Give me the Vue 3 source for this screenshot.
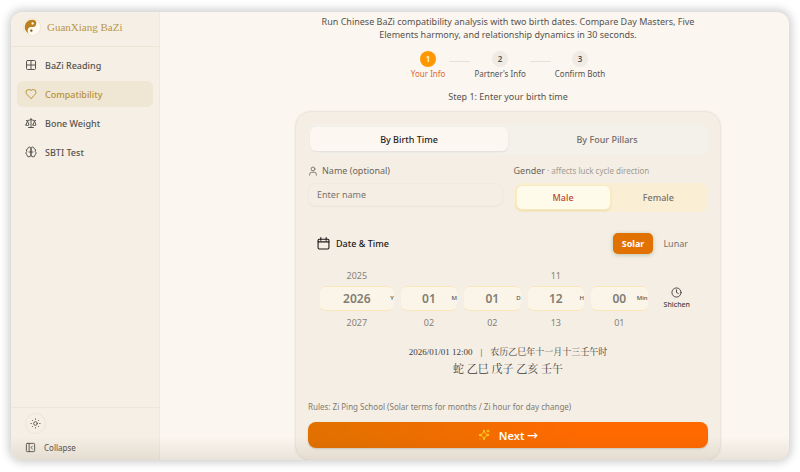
<script setup>
import { ref } from 'vue'

const nav = ref([
  { id: 'reading', label: 'BaZi Reading' },
  { id: 'match', label: 'Compatibility' },
  { id: 'bone', label: 'Bone Weight' },
  { id: 'sbti', label: 'SBTI Test' },
])
const current = ref('match')
const steps = ['Your Info', "Partner's Info", 'Confirm Both']
const step = ref(0)
const mode = ref('time')
const name = ref('')
const gender = ref('male')
const calendar = ref('solar')
const wheels = [
  { unit: 'Y', prev: '2025', value: '2026', next: '2027' },
  { unit: 'M', prev: '', value: '01', next: '02' },
  { unit: 'D', prev: '', value: '01', next: '02' },
  { unit: 'H', prev: '11', value: '12', next: '13' },
  { unit: 'Min', prev: '', value: '00', next: '01' },
]
</script>

<template>
  <div class="window">
    <aside class="sidebar">
      <a class="brand" href="#">
        <svg class="logo" viewBox="0 0 32 32" aria-hidden="true">
          <circle cx="16" cy="16" r="15.200" fill="#fffaf2" stroke="#ecdcc4" stroke-width="1" />
          <g transform="rotate(10 16 16)">
            <path d="M16 3A13 13 0 0 0 16 29A6.500 6.500 0 0 1 16 16A6.500 6.500 0 0 0 16 3Z" fill="#b9811f" />
            <circle cx="16" cy="9.500" r="2.200" fill="#fffaf2" />
            <circle cx="16" cy="22.500" r="2.200" fill="#8a5a14" />
          </g>
        </svg>
        <span>GuanXiang BaZi</span>
      </a>
      <nav class="nav">
        <a v-for="n in nav" :key="n.id" href="#" :class="{ active: n.id === current }" @click.prevent="current = n.id">
          <svg class="icon" viewBox="0 0 24 24" aria-hidden="true">
            <template v-if="n.id === 'reading'">
              <rect x="3" y="3" width="18" height="18" rx="2" /><path d="M3 12h18M12 3v18" />
            </template>
            <path v-else-if="n.id === 'match'" d="M19 14c1.500-1.500 3-3.200 3-5.500A5.500 5.500 0 0 0 16.500 3c-1.800 0-3 .5-4.500 2-1.500-1.500-2.700-2-4.500-2A5.500 5.500 0 0 0 2 8.500c0 2.300 1.500 4 3 5.500l7 7Z" />
            <template v-else-if="n.id === 'bone'">
              <path d="m16 16 3-8 3 8c-.9.650-1.900 1-3 1s-2.100-.350-3-1ZM2 16l3-8 3 8c-.9.650-1.900 1-3 1s-2.100-.350-3-1ZM7 21h10M12 3v18M3 7h2c2 0 5-1 7-2 2 1 5 2 7 2h2" />
            </template>
            <template v-else>
              <path d="M12 5a3 3 0 1 0-6 .1 4 4 0 0 0-2.500 5.800 4 4 0 0 0 .5 6.600A4 4 0 1 0 12 18ZM12 5a3 3 0 1 1 6 .1 4 4 0 0 1 2.500 5.800 4 4 0 0 1-.5 6.600A4 4 0 1 1 12 18ZM8 12h8" />
            </template>
          </svg>
          <span>{{ n.label }}</span>
        </a>
      </nav>
      <div class="side-foot">
        <button class="theme" type="button" aria-label="Theme">
          <svg class="icon small" viewBox="0 0 24 24" aria-hidden="true">
            <circle cx="12" cy="12" r="4" />
            <path d="M12 2v1M12 21v1M4.900 4.900l.7.7M18.400 18.400l.7.7M2 12h1M21 12h1M5.600 18.400l-.7.7M19.100 4.900l-.7.7" />
          </svg>
        </button>
        <button class="collapse" type="button">
          <svg class="icon small" viewBox="0 0 24 24" aria-hidden="true">
            <rect x="3" y="3" width="18" height="18" rx="2" /><path d="M9 3v18M16 15l-3-3 3-3" />
          </svg>
          <span>Collapse</span>
        </button>
      </div>
    </aside>

    <main class="main">
      <p class="intro">Run Chinese BaZi compatibility analysis with two birth dates. Compare Day Masters, Five Elements harmony, and relationship dynamics in 30 seconds.</p>
      <ol class="steps">
        <template v-for="(s, i) in steps" :key="s">
          <li v-if="i" class="rule" aria-hidden="true"></li>
          <li class="step" :class="{ on: i === step }">
            <span class="dot">{{ i + 1 }}</span>
            <span>{{ s }}</span>
          </li>
        </template>
      </ol>
      <h2 class="title">Step 1: Enter your birth time</h2>

      <form class="card" @submit.prevent>
        <div class="tabs" role="tablist">
          <button type="button" role="tab" :class="{ on: mode === 'time' }" :aria-selected="mode === 'time'" @click="mode = 'time'">By Birth Time</button>
          <button type="button" role="tab" :class="{ on: mode === 'pillars' }" :aria-selected="mode === 'pillars'" @click="mode = 'pillars'">By Four Pillars</button>
        </div>

        <div class="person">
          <div class="field">
            <label class="label" for="name">
              <svg class="icon user" viewBox="0 0 24 24" aria-hidden="true">
                <circle cx="12" cy="7" r="4.500" /><path d="M20 22v-2a5 5 0 0 0-5-5H9a5 5 0 0 0-5 5v2" />
              </svg>
              Name (optional)
            </label>
            <input id="name" v-model="name" class="text" type="text" placeholder="Enter name" />
          </div>
          <div class="field">
            <div id="gender-label" class="label gender-label">Gender <small>· affects luck cycle direction</small></div>
            <div class="gender" role="radiogroup" aria-labelledby="gender-label">
              <label :class="{ on: gender === 'male' }"><input v-model="gender" type="radio" name="gender" value="male" />Male</label>
              <label :class="{ on: gender === 'female' }"><input v-model="gender" type="radio" name="gender" value="female" />Female</label>
            </div>
          </div>
        </div>

        <section class="when">
          <header class="when-head">
            <h3>
              <svg class="icon cal" viewBox="0 0 24 24" aria-hidden="true">
                <rect x="2" y="4" width="20" height="18" rx="2" /><path d="M7 1v5M17 1v5M2 9h20" />
              </svg>
              Date &amp; Time
            </h3>
            <div class="switch">
              <button type="button" :class="{ on: calendar === 'solar' }" @click="calendar = 'solar'">Solar</button>
              <button type="button" :class="{ on: calendar === 'lunar' }" @click="calendar = 'lunar'">Lunar</button>
            </div>
          </header>
          <div class="wheels">
            <div v-for="w in wheels" :key="w.unit" class="wheel">
              <span class="near">{{ w.prev }}</span>
              <div class="value"><strong>{{ w.value }}</strong><span class="unit">{{ w.unit }}</span></div>
              <span class="near">{{ w.next }}</span>
            </div>
            <button class="shichen" type="button">
              <svg class="icon small" viewBox="0 0 24 24" aria-hidden="true">
                <circle cx="12" cy="12" r="10" /><path d="M12 6v6l4 2" />
              </svg>
              Shichen
            </button>
          </div>
          <div class="result">
            <p class="dates"><span>2026/01/01 12:00</span><i>|</i><span>农历乙巳年十一月十三壬午时</span></p>
            <p class="pillars">蛇 乙巳 戊子 乙亥 壬午</p>
          </div>
        </section>

        <p class="rules">Rules: Zi Ping School (Solar terms for months / Zi hour for day change)</p>
        <button class="next" type="submit">
          <svg class="icon spark" viewBox="0 0 24 24" aria-hidden="true">
            <path d="M9.900 15.500A2 2 0 0 0 8.500 14.100l-6.100-1.600a.5.5 0 0 1 0-1L8.500 9.900A2 2 0 0 0 9.900 8.500l1.600-6.100a.5.5 0 0 1 1 0l1.600 6.100a2 2 0 0 0 1.400 1.400l6.100 1.600a.5.5 0 0 1 0 1l-6.100 1.600a2 2 0 0 0-1.400 1.400l-1.600 6.100a.5.5 0 0 1-1 0ZM20 2v4M22 4h-4M4 20h.1" />
          </svg>
          <span>Next →</span>
        </button>
      </form>
    </main>
  </div>
</template>

<style>
body {
  margin: 0;
  background: #fff;
}
</style>

<style scoped>
* {
  box-sizing: border-box;
}
p,
h2,
h3,
ol {
  margin: 0;
  padding: 0;
  font-weight: 400;
  list-style: none;
}
button,
input {
  font: inherit;
  color: inherit;
  border: 0;
  background: none;
  padding: 0;
  margin: 0;
}
a {
  color: inherit;
  text-decoration: none;
}
.window {
  position: relative;
  display: flex;
  height: calc(100vh - 24px);
  margin: 12px 11px;
  overflow: hidden;
  border-radius: 12px;
  background: #fbf6ef;
  box-shadow: 0 0 9px 3px rgba(0, 0, 0, 0.18);
  font: 9px/13px "Noto Sans", "Noto Sans CJK SC", sans-serif;
  color: #57534e;
}
.window::after {
  content: "";
  position: absolute;
  inset: auto 0 0;
  height: 24px;
  background: linear-gradient(transparent, rgba(80, 60, 40, 0.1));
  pointer-events: none;
}
.icon {
  width: 12px;
  height: 12px;
  flex: none;
  fill: none;
  stroke: currentColor;
  stroke-width: 2;
  stroke-linecap: round;
  stroke-linejoin: round;
}
.small {
  width: 11px;
  height: 11px;
}
.user {
  width: 10px;
  height: 10px;
}
.sidebar {
  display: flex;
  flex-direction: column;
  flex: 0 0 149px;
  background: #f5efe5;
  border-right: 1px solid #efe8dc;
}
.brand {
  display: flex;
  align-items: center;
  gap: 6px;
  height: 35px;
  padding: 0 12px 4px;
  border-bottom: 1px solid #ece5d6;
  font: 11px/16px "Liberation Serif", serif;
  color: #b8964a;
}
.logo {
  width: 18px;
  height: 18px;
}
.nav {
  display: flex;
  flex-direction: column;
  gap: 3px;
  padding: 5px 6px;
  font-weight: 500;
}
.nav a {
  display: flex;
  align-items: center;
  gap: 8px;
  height: 26px;
  padding: 0 8px;
  border-radius: 6px;
}
.nav a.active {
  background: #efe6d3;
  color: #b8923a;
}
.side-foot {
  display: flex;
  flex-direction: column;
  align-items: flex-start;
  gap: 7px;
  margin-top: auto;
  padding: 5px 14px 6px;
  border-top: 1px solid #ebe6d9;
  font-size: 8px;
}
.theme {
  display: grid;
  place-items: center;
  width: 21px;
  height: 21px;
  border: 1px solid #ebe6da;
  border-radius: 50%;
}
.collapse {
  display: flex;
  align-items: center;
  gap: 8px;
}
.main {
  flex: 1;
  min-width: 0;
  padding: 3px 68px 0 135px;
}
.intro {
  padding: 0 16px;
  text-align: center;
}
.steps {
  display: flex;
  justify-content: center;
  gap: 4px;
  margin-top: 10px;
  font-size: 8px;
  line-height: 12px;
}
.step {
  display: flex;
  flex-direction: column;
  align-items: center;
  gap: 1px;
}
.dot {
  display: grid;
  place-items: center;
  width: 16px;
  height: 16px;
  border-radius: 50%;
  background: #f0ebe4;
  font-weight: 600;
}
.step.on {
  color: #dd6b35;
}
.on .dot {
  background: #ff9800;
  color: #fff;
}
.rule {
  width: 21px;
  height: 1px;
  margin-top: 10px;
  background: #e5e0d9;
}
.title {
  margin: 10px 0 8px;
  font-size: 9px;
  text-align: center;
}
.card {
  padding: 12px;
  border: 1px solid #eae5dc;
  border-radius: 16px;
  background: #f5eee4;
  box-shadow: 0 0 3px rgba(100, 90, 70, 0.08);
}
.tabs {
  display: grid;
  grid-template-columns: 1fr 1fr;
  padding: 3px 2px;
  border-radius: 8px;
  background: #f4f0ea;
  font-weight: 500;
}
.tabs button {
  height: 24px;
  border-radius: 6px;
  color: #706c67;
}
.tabs button.on {
  background: #fcf7f0;
  color: #292524;
  box-shadow: 0 1px 2px rgba(0, 0, 0, 0.08);
}
.person {
  display: grid;
  grid-template-columns: 1fr 1fr;
  gap: 11px;
  margin-top: 10px;
}
.label {
  display: flex;
  align-items: center;
  gap: 4px;
  height: 13px;
  margin-bottom: 6px;
  color: #6b6660;
}
.gender-label {
  gap: 2px;
}
.label small {
  font-size: 8px;
  color: #a29c93;
}
.text {
  display: block;
  width: 100%;
  height: 23px;
  padding: 0 8px;
  border: 1px solid #eeeae2;
  border-radius: 7px;
  box-shadow: 0 1px 2px rgba(0, 0, 0, 0.04);
}
.text::placeholder {
  color: #78736c;
  opacity: 1;
}
.gender {
  display: grid;
  grid-template-columns: 1fr 1fr;
  padding: 2px;
  border-radius: 8px;
  background: #faefd5;
  font-weight: 500;
}
.gender label {
  position: relative;
  display: grid;
  place-items: center;
  height: 25px;
  border-radius: 6px;
  color: #78716c;
}
.gender label.on {
  border: 1px solid #faeabf;
  background: #fffbea;
  color: #b9482f;
  box-shadow: 0 1px 2px rgba(200, 150, 40, 0.25);
}
.gender input {
  position: absolute;
  inset: 0;
  opacity: 0;
}
.when {
  padding: 21px 9px 0;
}
.when-head {
  display: flex;
  align-items: center;
  justify-content: space-between;
}
.when-head h3 {
  display: flex;
  align-items: center;
  gap: 6px;
  font-size: 9px;
  font-weight: 500;
  color: #1c1917;
}
.cal {
  width: 13px;
  height: 13px;
}
.switch {
  display: flex;
}
.switch button {
  height: 21px;
  padding: 0 9px;
  border-radius: 5px;
  color: #78716c;
}
.switch button + button {
  padding: 0 11px 0 10px;
}
.switch button.on {
  background: #e17100;
  color: #fff;
  font-weight: 700;
  box-shadow: 0 1px 4px rgba(70, 120, 70, 0.35);
}
.wheels {
  display: grid;
  grid-template-columns: 73fr 56fr 56fr 56fr 56fr 44fr;
  gap: 7px;
  align-items: center;
  margin: 10px 0 0;
  padding: 0 0 0 3px;
}
.wheel {
  display: grid;
  grid-template-rows: 22px 25px 22px;
  align-items: center;
  text-align: center;
  color: #85817a;
}
.value {
  display: grid;
  grid-template-columns: 1fr auto 1fr;
  align-items: center;
  height: 25px;
  border-top: 1px solid #fbe6b8;
  border-bottom: 1px solid #fbe6b8;
  border-radius: 6px;
  background: #faf5e8;
}
.value strong {
  grid-column: 2;
  font-size: 12px;
  font-weight: 600;
  color: #827d73;
}
.unit {
  justify-self: end;
  font-size: 6px;
  font-weight: 500;
  color: #57534e;
}
.shichen {
  display: flex;
  flex-direction: column;
  align-items: center;
  font-size: 7px;
  font-weight: 500;
  color: #44403c;
}
.result {
  margin-top: 10px;
  text-align: center;
  font-family: "Liberation Serif", "Noto Serif CJK SC", "Noto Sans CJK SC", serif;
  color: #3f3b37;
}
.dates {
  display: flex;
  justify-content: center;
  gap: 8px;
  font-size: 9px;
  line-height: 18px;
}
.dates i {
  font-style: normal;
}
.pillars {
  font-size: 11px;
  line-height: 17px;
}
.rules {
  margin: 22px 0 9px;
  font-size: 8px;
  color: #807a72;
}
.next {
  display: flex;
  align-items: center;
  justify-content: center;
  gap: 9px;
  width: 100%;
  height: 26px;
  border-radius: 8px;
  background: linear-gradient(90deg, #e17100, #ff6900 70%);
  color: #fff;
  font-size: 11px;
  font-weight: 600;
  box-shadow: 0 1px 2px rgba(0, 0, 0, 0.15);
}
.spark {
  color: #ffd21f;
}
</style>
